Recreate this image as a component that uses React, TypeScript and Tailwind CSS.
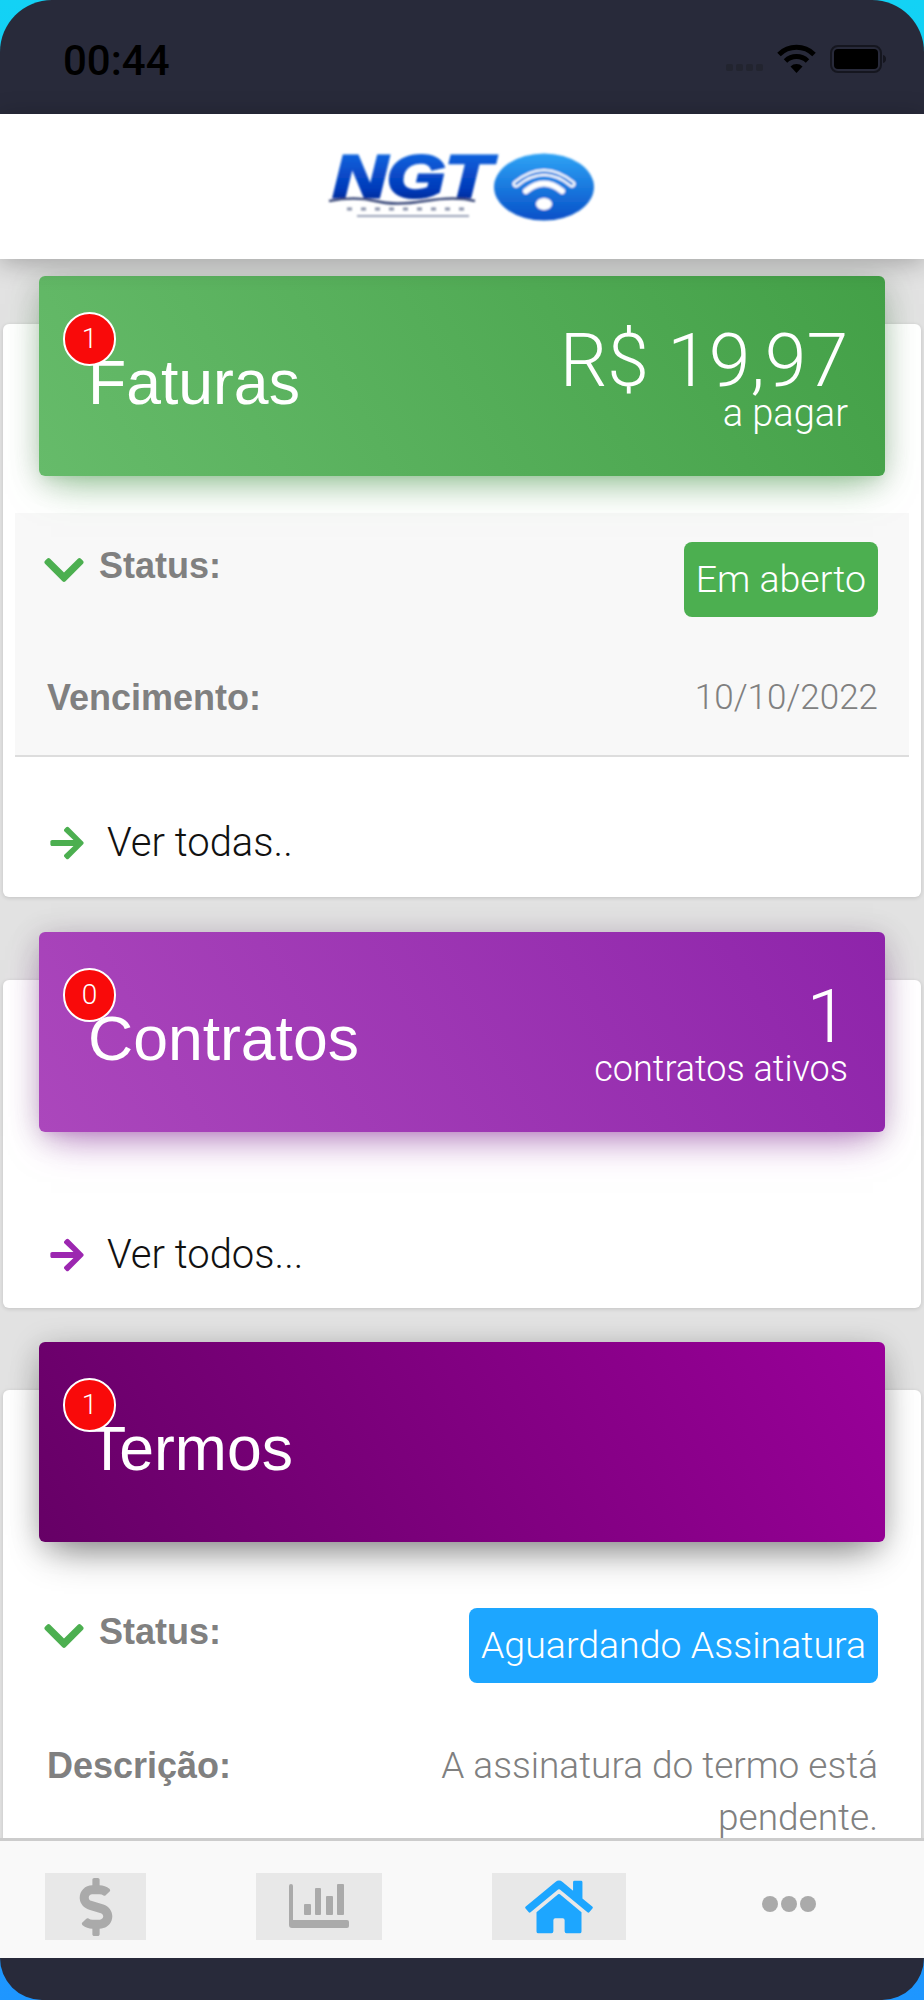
import React from "react";
import { FaArrowRight, FaChevronDown, FaDollarSign, FaHome } from "react-icons/fa";

const font = { fontFamily: '"Liberation Sans", Arial, sans-serif' };
const light = { fontFamily: 'Roboto, "Liberation Sans", sans-serif', fontWeight: 300 };

function Logo() {
  return (
    <svg width="280" height="80" viewBox="0 0 280 80" className="block">
      <defs>
        <linearGradient id="ngt" x1="0" y1="0" x2="0" y2="1">
          <stop offset="0" stopColor="#0f6fe8" />
          <stop offset="0.7" stopColor="#0439b8" />
          <stop offset="1" stopColor="#021f7a" />
        </linearGradient>
        <linearGradient id="orb" x1="0" y1="0" x2="0" y2="1">
          <stop offset="0" stopColor="#2fa3f5" />
          <stop offset="1" stopColor="#0650c8" />
        </linearGradient>
        <filter id="soft" x="-10%" y="-10%" width="120%" height="120%">
          <feGaussianBlur stdDeviation="1.2" />
        </filter>
      </defs>
      <g filter="url(#soft)">
        <text x="8" y="50" fontFamily="Liberation Sans" fontWeight="700" fontStyle="italic" fontSize="60" fill="url(#ngt)" stroke="url(#ngt)" strokeWidth="3" textLength="158" lengthAdjust="spacingAndGlyphs">NGT</text>
        <path d="M4 54 Q30 49 50 54 T100 54 T150 54" stroke="#3a4a7a" strokeWidth="2.5" fill="none" />
        <path d="M22 62 H146" stroke="#8a93ab" strokeWidth="3" strokeDasharray="5 9" fill="none" />
        <path d="M32 69 H144" stroke="#9aa2b8" strokeWidth="2" fill="none" />
        <ellipse cx="219" cy="40" rx="50" ry="33.5" fill="url(#orb)" />
        <path d="M191 37 Q219 14 247 37" stroke="#fff" strokeWidth="7" strokeLinecap="round" fill="none" />
        <path d="M191 37 Q219 14 247 37" stroke="#1f7fe0" strokeWidth="2.5" strokeLinecap="round" fill="none" />
        <path d="M201 44 Q219 29 237 44" stroke="#fff" strokeWidth="6" strokeLinecap="round" fill="none" />
        <ellipse cx="219" cy="57" rx="8" ry="6" fill="#fff" />
      </g>
    </svg>
  );
}

function Badge({ n }: { n: number }) {
  return (
    <div className="absolute left-[24px] top-[36px] flex h-[54px] w-[53px] items-center justify-center rounded-full border-2 border-white bg-[#f90a0a] text-[28px] text-white" style={light}>
      {n}
    </div>
  );
}

function CardHeader({
  title,
  n,
  cls,
  big,
  small,
  smallCls,
}: {
  title: string;
  n: number;
  cls: string;
  big?: string;
  small?: string;
  smallCls?: string;
}) {
  return (
    <div className={`relative mx-[36px] -mt-[48px] flex h-[200px] items-center justify-between rounded-[6px] pl-[49px] pr-[37px] text-white ${cls}`}>
      <Badge n={n} />
      <div className="mt-[12px] text-[62.5px] leading-none">{title}</div>
      {big && (
        <div className="mt-[6px] flex flex-col items-end">
          <div className="text-[75px] leading-[72px]" style={light}>{big}</div>
          <div className={`-mt-[4px] leading-[42px] ${smallCls}`} style={light}>{small}</div>
        </div>
      )}
    </div>
  );
}

function StatusRow({ label, color }: { label: string; color: string }) {
  return (
    <div className="flex items-start justify-between pl-[28px] pr-[31px]">
      <div className="flex items-start gap-[14px]">
        <FaChevronDown className="mt-[5px] h-[46px] w-[42px] text-[#4caf50]" />
        <span className="mt-[4px] text-[36px] font-bold leading-[40px] text-[#808080]">Status:</span>
      </div>
      <div className={`flex h-[75px] items-center rounded-[8px] px-[12px] text-[37.5px] text-white ${color}`} style={light}>{label}</div>
    </div>
  );
}

function SeeAll({ label, color }: { label: string; color: string }) {
  return (
    <div className="flex items-center pl-[45px]">
      <FaArrowRight className={`h-[38px] w-[38px] ${color}`} />
      <span className="ml-[21px] text-[40px] leading-[44px] text-[#111]" style={light}>{label}</span>
    </div>
  );
}

function ChartIcon() {
  return (
    <svg width="60" height="46" viewBox="0 0 60 46" fill="#aaaaaa">
      <path d="M0 2a2 2 0 0 1 4 0v34h54a2 2 0 0 1 2 2v4a2 2 0 0 1-2 2H3a3 3 0 0 1-3-3z" />
      <rect x="15" y="20" width="7" height="11" rx="1" />
      <rect x="26" y="4" width="6" height="27" rx="1" />
      <rect x="37" y="12" width="7" height="19" rx="1" />
      <rect x="48" y="0" width="7" height="31" rx="1" />
    </svg>
  );
}

export default function App() {
  return (
    <div
      className="relative h-[2000px] w-[924px] overflow-hidden bg-gradient-to-b from-[#13d2f5] to-[#1e96ff]"
      style={font}
    >
      <div className="flex h-full flex-col">
        {/* status bar */}
        <div className="flex h-[114px] shrink-0 items-start justify-between rounded-t-[52px] bg-[#282a3a] pl-[63px] pr-[38px] pt-[40px]">
          <span className="text-[42px] leading-[42px] text-black" style={{ fontFamily: "Roboto, sans-serif", fontWeight: 500 }}>00:44</span>
          <div className="flex items-center gap-[14px] pt-[4px]">
            <div className="mt-[18px] flex gap-[3px]">
              <span className="h-[7px] w-[7px] rounded-[2px] bg-[#22242f]" />
              <span className="h-[7px] w-[7px] rounded-[2px] bg-[#22242f]" />
              <span className="h-[7px] w-[7px] rounded-[2px] bg-[#22242f]" />
              <span className="h-[7px] w-[7px] rounded-[2px] bg-[#22242f]" />
            </div>
            <svg width="39" height="29" viewBox="0 0 39 29" fill="none" stroke="#000" strokeWidth="5">
              <path d="M2 10.5a25 25 0 0 1 35 0" />
              <path d="M8.500 17a16 16 0 0 1 22 0" />
              <path d="M19.500 29l-6-6.500a8.500 8.500 0 0 1 12 0z" fill="#000" stroke="none" />
            </svg>
            <svg width="56" height="28" viewBox="0 0 56 28">
              <rect x="1" y="1" width="50" height="26" rx="7" fill="none" stroke="#15161f" strokeWidth="2" />
              <rect x="4" y="4" width="44" height="20" rx="4" fill="#000" />
              <path d="M53 10c2 .5 3 2 3 4s-1 3.500-3 4z" fill="#15161f" />
            </svg>
          </div>
        </div>

        {/* logo header */}
        <div className="relative z-20 flex h-[145px] shrink-0 items-center justify-center bg-white pl-[6px] shadow-[0_4px_24px_rgba(0,0,0,0.28)]">
          <Logo />
        </div>

        {/* content */}
        <div className="min-h-0 flex-1 overflow-hidden bg-[#e2e2e2] pt-[65px]">
          <div className="mx-[3px] flow-root h-[573px] rounded-[6px] bg-white shadow-[0_1px_4px_rgba(0,0,0,0.14)]">
            <CardHeader
              title="Faturas"
              n={1}
              cls="bg-[linear-gradient(60deg,#66bb6a,#43a047)] shadow-[0_16px_38px_-12px_rgba(76,175,80,0.56),0_4px_30px_0_rgba(0,0,0,0.18),0_8px_10px_-5px_rgba(76,175,80,0.1)]"
              big="R$ 19,97"
              small="a pagar"
              smallCls="text-[38px]"
            />
            <div className="mx-[12px] mt-[37px] h-[244px] border-b-2 border-[#dddddd] bg-[#f8f8f8] pt-[29px]">
              <StatusRow label="Em aberto" color="bg-[#4caf50]" />
              <div className="mt-[54px] flex items-center justify-between pl-[32px] pr-[31px]">
                <span className="text-[36px] font-bold leading-[54px] text-[#808080]">Vencimento:</span>
                <span className="text-[35px] leading-[54px] text-[#808080]" style={light}>10/10/2022</span>
              </div>
            </div>
            <div className="pt-[64px]">
              <SeeAll label="Ver todas.." color="text-[#4caf50]" />
            </div>
          </div>

          <div className="mx-[3px] mt-[83px] flow-root h-[328px] rounded-[6px] bg-white shadow-[0_1px_4px_rgba(0,0,0,0.14)]">
            <CardHeader
              title="Contratos"
              n={0}
              cls="bg-[linear-gradient(60deg,#ab47bc,#8e24aa)] shadow-[0_16px_38px_-12px_rgba(156,39,176,0.56),0_4px_30px_0_rgba(0,0,0,0.18),0_8px_10px_-5px_rgba(156,39,176,0.1)]"
              big="1"
              small="contratos ativos"
              smallCls="text-[36px]"
            />
            <div className="pt-[101px]">
              <SeeAll label="Ver todos..." color="text-[#9c27b0]" />
            </div>
          </div>

          <div className="mx-[3px] mt-[82px] flow-root h-[600px] rounded-[6px] bg-white shadow-[0_1px_4px_rgba(0,0,0,0.14)]">
            <CardHeader
              title="Termos"
              n={1}
              cls="bg-[linear-gradient(60deg,#660066,#990099)] shadow-[0_18px_38px_-12px_rgba(0,0,0,0.45),0_4px_30px_0_rgba(0,0,0,0.18)]"
            />
            <div className="mx-[12px] pt-[66px]">
              <StatusRow label="Aguardando Assinatura" color="bg-[#1da6ff]" />
              <div className="mt-[57px] flex items-start justify-between pl-[32px] pr-[31px]">
                <span className="text-[36px] font-bold leading-[52px] text-[#808080]">Descrição:</span>
                <span className="w-[460px] text-right text-[37px] leading-[52px] text-[#808080]" style={light}>
                  A assinatura do termo está pendente.
                </span>
              </div>
            </div>
          </div>
        </div>

        {/* tab bar */}
        <div className="relative z-20 flex h-[120px] shrink-0 items-start gap-[110px] border-t-[3px] border-[#cccccc] bg-[#f9f9f9] pl-[45px] pt-[32px]">
          <div className="flex h-[67px] w-[101px] items-center justify-center bg-[#e8e8e8]">
            <FaDollarSign className="h-[58px] w-[36px] text-[#aaaaaa]" />
          </div>
          <div className="flex h-[67px] w-[126px] items-center justify-center bg-[#e8e8e8]">
            <ChartIcon />
          </div>
          <div className="flex h-[67px] w-[134px] items-center justify-center bg-[#e8e8e8]">
            <FaHome className="h-[60px] w-[68px] text-[#1da6ff]" />
          </div>
          <div className="-mt-[3px] flex h-[67px] w-[106px] items-center justify-center gap-[3px]">
            <span className="h-[16px] w-[16px] rounded-full bg-[#aaaaaa]" />
            <span className="h-[16px] w-[16px] rounded-full bg-[#aaaaaa]" />
            <span className="h-[16px] w-[16px] rounded-full bg-[#aaaaaa]" />
          </div>
        </div>

        {/* bottom bezel */}
        <div className="h-[42px] shrink-0 rounded-b-[48px] bg-[#282a3a]" />
      </div>
    </div>
  );
}
